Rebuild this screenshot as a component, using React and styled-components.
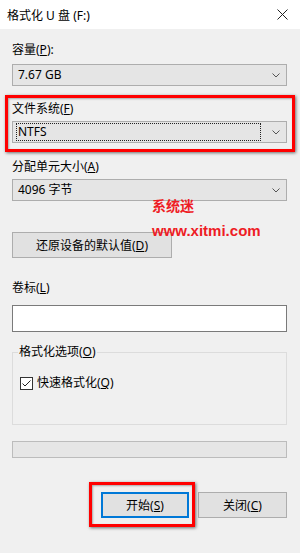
import React from "react";
import styled, { createGlobalStyle } from "styled-components";

const Global = createGlobalStyle`
  html, body { margin: 0; padding: 0; background: #f0f0f0; }
  * { box-sizing: border-box; }
`;

const Window = styled.div`
  width: 300px;
  height: 553px;
  background: #f0f0f0;
  font-family: "Noto Sans", "Noto Sans CJK SC", sans-serif;
  font-size: 12px;
  color: #000;
  position: relative;
  overflow: hidden;
`;

const TitleBar = styled.div`
  height: 29px;
  background: #fff;
  display: flex;
  align-items: center;
  justify-content: space-between;
  padding: 0 12px 0 7px;
  font-size: 12px;
`;

const CloseIcon = styled.svg`
  width: 11px;
  height: 11px;
  display: block;
`;

const Body = styled.div`
  padding: 13px 13px 0 12px;
  display: flex;
  flex-direction: column;
`;

const Label = styled.div`
  height: 16px;
  line-height: 16px;
  margin-top: ${(p) => p.$mt || 0}px;
  u { text-decoration: underline; text-underline-offset: 1px; }
`;

const Combo = styled.div`
  height: 22px;
  margin-top: ${(p) => p.$mt || 6}px;
  background: #e5e5e5;
  border: 1px solid #adadad;
  display: flex;
  align-items: center;
  justify-content: space-between;
  padding: 0 6px 0 3px;
`;

const ComboText = styled.span`
  line-height: 16px;
  flex: ${(p) => (p.$focus ? 1 : "none")};
  margin-right: ${(p) => (p.$focus ? "11px" : 0)};
  border: 1px ${(p) => (p.$focus ? "dotted #222" : "solid transparent")};
  padding: 0 1px;
`;

const Chevron = () => (
  <svg width="8" height="5" viewBox="0 0 8 5">
    <path d="M0.5 0.5 L4 4 L7.5 0.5" fill="none" stroke="#555" strokeWidth="1" />
  </svg>
);

const Highlight = styled.div`
  position: relative;
  display: flex;
  flex-direction: column;
  margin-top: ${(p) => p.$mt || 0}px;
  &::after {
    content: "";
    position: absolute;
    top: ${(p) => p.$t}px;
    left: ${(p) => p.$l}px;
    right: ${(p) => p.$r}px;
    bottom: ${(p) => p.$b}px;
    border: 3px solid #ff0000;
    box-shadow: 1px 1px 3px rgba(0, 0, 0, 0.55), inset 1px 1px 2px rgba(0, 0, 0, 0.3);
    pointer-events: none;
  }
`;

const Button = styled.button`
  font: inherit;
  color: #000;
  height: 26px;
  width: ${(p) => p.$w}px;
  background: #e1e1e1;
  border: 1px solid ${(p) => (p.$primary ? "#0078d7" : "#adadad")};
  box-shadow: ${(p) => (p.$primary ? "inset 0 0 0 1px #0078d7" : "none")};
  padding: 0;
  margin: 0;
  margin-top: ${(p) => p.$mt || 0}px;
  u { text-decoration: underline; text-underline-offset: 1px; }
`;

const TextInput = styled.div`
  height: 27px;
  margin-top: 9px;
  background: #fff;
  border: 1px solid #7a7a7a;
`;

const Group = styled.fieldset`
  margin: 12px 0 0;
  padding: 15px 7px 33px;
  border: 1px solid #dcdcdc;
  min-width: 0;
`;

const Legend = styled.legend`
  padding: 0 1px;
  margin-left: -2px;
  line-height: 16px;
  u { text-decoration: underline; text-underline-offset: 1px; }
`;

const CheckRow = styled.div`
  display: flex;
  align-items: center;
  gap: 4px;
  line-height: 16px;
  u { text-decoration: underline; text-underline-offset: 1px; }
`;

const CheckBox = styled.span`
  width: 13px;
  height: 13px;
  border: 1px solid #333;
  background: #fff;
  display: flex;
  align-items: center;
  justify-content: center;
`;

const Progress = styled.div`
  height: 17px;
  margin-top: 16px;
  background: #e6e6e6;
  border: 1px solid #bcbcbc;
`;

const ButtonRow = styled.div`
  display: flex;
  justify-content: flex-end;
  gap: 9px;
  margin-top: 34px;
`;

const Watermark = styled.div`
  position: absolute;
  left: 152px;
  top: 195px;
  color: #ee1c25;
  font-family: "Liberation Sans", "Noto Sans CJK SC", sans-serif;
  font-weight: bold;
  font-size: 15px;
  line-height: 20px;
  display: flex;
  flex-direction: column;
  gap: 6px;
  pointer-events: none;
`;

const WmCn = styled.span`
  font-family: "Noto Sans CJK SC", sans-serif;
  font-size: 14px;
`;

export default function App() {
  return (
    <Window>
      <Global />
      <TitleBar>
        <span>格式化 U 盘 (F:)</span>
        <CloseIcon viewBox="0 0 11 11">
          <path d="M0.5 0.5 L10.5 10.5 M10.5 0.5 L0.5 10.5" stroke="#222" strokeWidth="1" />
        </CloseIcon>
      </TitleBar>
      <Body>
        <Label>
          容量(<u>P</u>):
        </Label>
        <Combo>
          <ComboText>7.67 GB</ComboText>
          <Chevron />
        </Combo>

        <Highlight $mt={15} $t={-6} $l={-7} $r={-8} $b={-9}>
          <Label>
            文件系统(<u>F</u>)
          </Label>
          <Combo $mt={4}>
            <ComboText $focus>NTFS</ComboText>
            <Chevron />
          </Combo>
        </Highlight>

        <Label $mt={16}>
          分配单元大小(<u>A</u>)
        </Label>
        <Combo $mt={4}>
          <ComboText>4096 字节</ComboText>
          <Chevron />
        </Combo>

        <div>
          <Button $w={160} $mt={31}>
            还原设备的默认值(<u>D</u>)
          </Button>
        </div>

        <Label $mt={22}>
          卷标(<u>L</u>)
        </Label>
        <TextInput />

        <Group>
          <Legend>
            格式化选项(<u>O</u>)
          </Legend>
          <CheckRow>
            <CheckBox>
              <svg width="11" height="11" viewBox="0 0 11 11">
                <path d="M1.5 5.5 L4 8 L9.5 2.5" fill="none" stroke="#222" strokeWidth="1" />
              </svg>
            </CheckBox>
            <span>
              快速格式化(<u>Q</u>)
            </span>
          </CheckRow>
        </Group>

        <Progress />

        <ButtonRow>
          <Highlight $t={-10} $l={-12} $r={-6} $b={-9}>
            <Button $w={88} $primary>
              开始(<u>S</u>)
            </Button>
          </Highlight>
          <Button $w={89}>
            关闭(<u>C</u>)
          </Button>
        </ButtonRow>
      </Body>
      <Watermark>
        <WmCn>系统迷</WmCn>
        <span>www.xitmi.com</span>
      </Watermark>
    </Window>
  );
}
